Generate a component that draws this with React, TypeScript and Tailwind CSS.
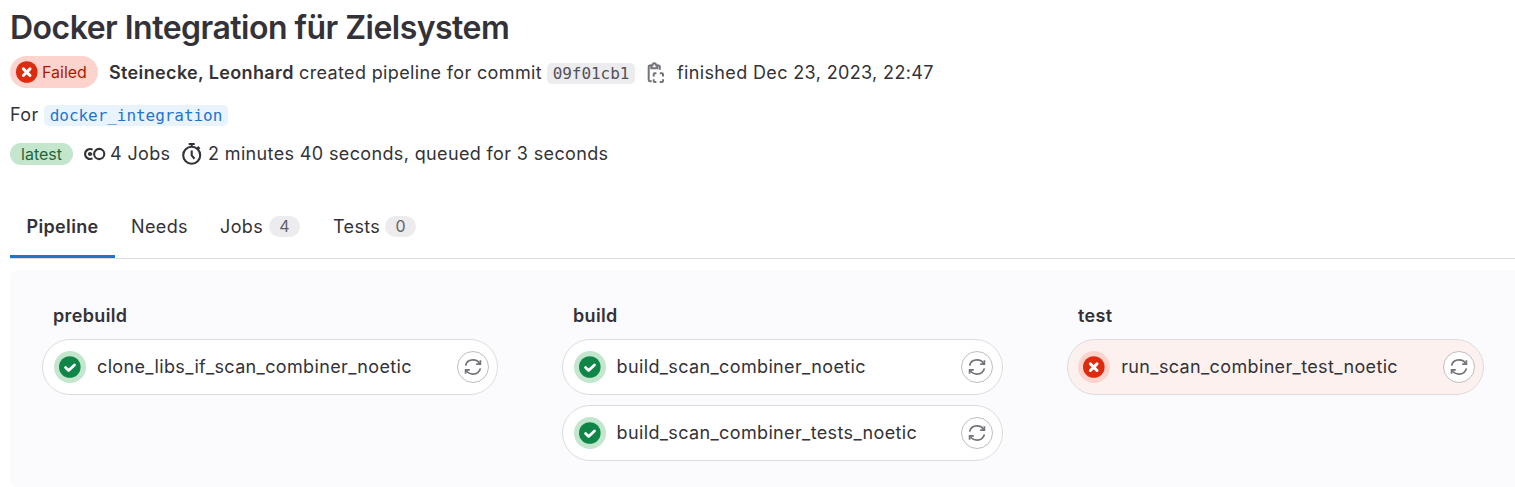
import type { ReactNode } from "react";

type Status = "success" | "failed";

function StatusIcon({ status }: { status: Status }) {
  return (
    <svg width="22" height="22" viewBox="0 0 22 22" fill="none" className="shrink-0">
      <circle cx="10.8" cy="11" r="10.8" fill={status === "success" ? "#108548" : "#dd2b0e"} />
      {status === "success" ? (
        <path d="M6.6 11.5L9.6 14.4L15.5 8.9" stroke="#fff" strokeWidth="2.8" strokeLinecap="round" strokeLinejoin="round" />
      ) : (
        <path d="M7.4 7.9L14 14.5M14 7.9L7.4 14.5" stroke="#fff" strokeWidth="3" strokeLinecap="round" />
      )}
    </svg>
  );
}

function RetryIcon() {
  return (
    <svg width="18" height="18" viewBox="0 0 18 18" fill="none" stroke="#737278" strokeWidth="1.7">
      <path d="M1.6 7.6C2.5 3.9 5.5 1.9 9 1.9C11.8 1.9 14.3 3.2 15.7 5.6" />
      <path d="M16.4 10.4C15.5 14.1 12.5 16.1 9 16.1C6.2 16.1 3.7 14.8 2.3 12.4" />
      <path d="M16.4 2.2V6.2H12.2M1.6 15.8V11.8H5.8" />
    </svg>
  );
}

function ClipboardIcon() {
  return (
    <svg width="22" height="24" viewBox="0 0 22 24" fill="none" stroke="#737278" strokeWidth="2" className="shrink-0">
      <path d="M6.7 20.2H4.8Q3.7 20.2 3.7 19.1V5.7Q3.7 4.6 4.8 4.6H6.4M12.6 4.6H13.7Q14.8 4.6 14.8 5.7V8.8" />
      <path d="M6.3 7.2V4.6H7.3C7.6 2.9 8.5 2.2 9.3 2.2S11 2.9 11.3 4.6H12.3V7.2Z" />
      <path d="M8.7 15.4V13.3Q8.7 12.2 9.8 12.2H11.4M14.8 12.2H16.9Q18 12.2 18 13.3V15.4M8.7 18.2V20Q8.7 21 9.8 21H11.4M14.8 21H16.9Q18 21 18 20V18.2" />
    </svg>
  );
}

function PipelineIcon() {
  return (
    <svg width="22" height="16" viewBox="0 0 22 16" fill="none" stroke="#333238" strokeWidth="2.1">
      <circle cx="15.2" cy="8" r="5.1" />
      <path d="M8.6 3.6C5 1.9 1.1 4.2 1.1 8S5 14.1 8.6 12.4" />
      <circle cx="6" cy="8" r="2.1" fill="#333238" stroke="none" />
      <path d="M6 8H8.2" strokeWidth="1.6" />
    </svg>
  );
}

function TimerIcon() {
  return (
    <svg width="22" height="24" viewBox="0 0 22 24" fill="none" stroke="#333238" strokeWidth="2.1">
      <circle cx="10.7" cy="13.3" r="8.5" />
      <path d="M7.7 2H13.7M10.7 2V5M16.5 4.8L18.6 6.9M10.7 8.5V13.4L13.5 16.7" />
    </svg>
  );
}

function Job({ name, status, inset }: { name: string; status: Status; inset: string }) {
  return (
    <div
      className={
        "flex h-14 items-center rounded-full border border-[#dcdcde] " +
        inset +
        (status === "failed" ? " bg-[#fcf1ef]" : " bg-white")
      }
    >
      <span
        className={
          "flex size-8 shrink-0 items-center justify-center rounded-full " +
          (status === "failed" ? "bg-[#fdd4cd]" : "bg-[#c3e6cd]")
        }
      >
        <StatusIcon status={status} />
      </span>
      <span className="ml-[11px] flex-1 pb-px whitespace-nowrap">{name}</span>
      <button className="flex size-8 shrink-0 items-center justify-center rounded-full border border-[#bfbfc3] bg-white">
        <RetryIcon />
      </button>
    </div>
  );
}

function Stage({ title, className, children }: { title: string; className: string; children: ReactNode }) {
  return (
    <section className={"shrink-0 " + className}>
      <h2 className="mb-[9px] pl-[11px] leading-7 font-semibold">{title}</h2>
      <div className="flex flex-col gap-2.5">{children}</div>
    </section>
  );
}

function Count({ children }: { children: ReactNode }) {
  return (
    <span className="flex h-[21px] w-[31px] items-center justify-center rounded-full bg-[#ececef] text-base tracking-normal text-[#626168]">
      {children}
    </span>
  );
}

export default function App() {
  return (
    <main className="h-[487px] w-full overflow-hidden bg-white pl-2.5 font-['Inter',sans-serif] text-[18px] tracking-[0.36px] text-[#333238]">
      <h1 className="flex h-[54px] items-center pt-0.5 text-[32px] font-semibold whitespace-nowrap">
        <span className="tracking-[-0.52px]">Docker Integration für Zielsystem</span>
      </h1>
      <div className="mt-0.5 flex h-8 items-center whitespace-nowrap">
        <span className="flex h-8 w-[88px] shrink-0 items-center gap-1 rounded-full bg-[#fdd4cd] pl-1.5 text-base tracking-normal text-[#ae1800]">
          <StatusIcon status="failed" />
          Failed
        </span>
        <strong className="ml-[11px] w-[190px] shrink-0 pt-px font-semibold">Steinecke, Leonhard</strong>
        <span className="w-[248px] shrink-0 pt-px">created pipeline for commit</span>
        <code className="mt-0.5 flex h-[21px] w-[88px] shrink-0 items-center justify-center rounded-[5px] bg-[#ececef] pt-0.5 font-['DejaVu_Sans_Mono',monospace] text-base tracking-[-0.05px] text-[#535158]">
          09f01cb1
        </code>
        <span className="ml-2.5 w-8 shrink-0 pt-0.5">
          <ClipboardIcon />
        </span>
        <span className="pt-px">finished Dec 23, 2023, 22:47</span>
      </div>
      <div className="mt-[11px] flex h-8 items-center">
        <span className="w-[34px] pb-0.5">For</span>
        <code className="flex h-[21px] w-[184px] items-center justify-center rounded-[5px] bg-[#e9f3fc] pt-0.5 font-['DejaVu_Sans_Mono',monospace] text-base tracking-[-0.05px] text-[#1f75cb]">
          docker_integration
        </code>
      </div>
      <div className="mt-[7px] flex h-8 items-center whitespace-nowrap">
        <span className="flex h-[22px] w-[63px] items-center justify-center rounded-full bg-[#c3e6cd] text-base tracking-normal text-[#24663b]">
          latest
        </span>
        <span className="ml-[11px] w-[26px]">
          <PipelineIcon />
        </span>
        <span className="w-[71px] pb-0.5">4 Jobs</span>
        <span className="w-[27px]">
          <TimerIcon />
        </span>
        <span className="pb-0.5">2 minutes 40 seconds, queued for 3 seconds</span>
      </div>
      <nav className="mt-[26px] flex h-[63px] items-stretch border-b border-[#dcdcde] whitespace-nowrap">
        <a className="flex w-[105px] items-center justify-center border-b-[3px] border-[#1f75cb] pt-px font-semibold">Pipeline</a>
        <a className="flex w-[89px] items-center pb-0.5 pl-4">Needs</a>
        <a className="flex w-[113px] items-center pb-0.5 pl-4">
          <span className="w-[49px]">Jobs</span>
          <Count>4</Count>
        </a>
        <a className="flex items-center pb-0.5 pl-4">
          <span className="w-[52px]">Tests</span>
          <Count>0</Count>
        </a>
      </nav>
      <div className="mt-[11px] flex h-[217px] gap-16 rounded-l-lg bg-[#fbfafd] pt-8 pl-8">
        <Stage title="prebuild" className="w-[456px]">
          <Job name="clone_libs_if_scan_combiner_noetic" status="success" inset="pr-2 pl-[11px]" />
        </Stage>
        <Stage title="build" className="w-[441px]">
          <Job name="build_scan_combiner_noetic" status="success" inset="pr-[9px] pl-[10.6px]" />
          <Job name="build_scan_combiner_tests_noetic" status="success" inset="pr-[9px] pl-[10.6px]" />
        </Stage>
        <Stage title="test" className="w-[417px]">
          <Job name="run_scan_combiner_test_noetic" status="failed" inset="pr-2 pl-[10.2px]" />
        </Stage>
      </div>
    </main>
  );
}
